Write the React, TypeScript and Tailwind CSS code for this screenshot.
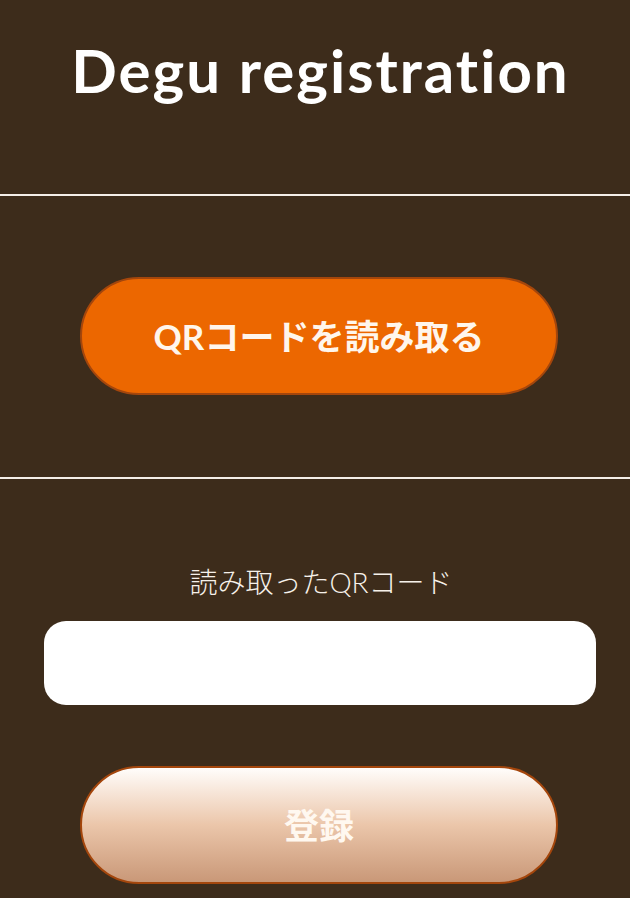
import { FC } from "react";

const font = "font-['Lato','Noto_Sans_CJK_JP',sans-serif]";

const App: FC = () => {
  return (
    <main className={`min-h-[898px] w-full bg-[#3d2c1b] text-white ${font}`}>
      <header className="h-[194px] pt-[34px] pl-[11px]">
        <h1 className="text-center text-[60px] font-bold leading-[72px] tracking-[2px] [font-variant-ligatures:none]">
          Degu registration
        </h1>
      </header>
      <hr className="h-[2px] border-0 bg-[#f4efe9]" />

      <section className="h-[281px] pt-[81px]">
        <button
          type="button"
          className="ml-[80px] flex h-[118px] w-[478px] items-center justify-center rounded-full border-2 border-[#a4460c] bg-[#ec6700] text-[35px] font-bold text-[#fff6ec]"
        >
          QRコードを読み取る
        </button>
      </section>
      <hr className="h-[2px] border-0 bg-[#f4efe9]" />

      <section className="pt-[85px] pb-[13px]">
        <p className="pl-[12px] text-center text-[28px] font-light leading-[36px] text-[#f6f1ea]">
          読み取ったQRコード
        </p>
        <input
          type="text"
          aria-label="QR code"
          className="mt-[21px] ml-[44px] block h-[84px] w-[552px] rounded-[22px] bg-white px-5 text-2xl text-black outline-none"
        />
        <button
          type="button"
          className="mt-[61px] ml-[80px] flex h-[118px] w-[478px] items-center justify-center rounded-full border-2 border-[#a4460c] bg-gradient-to-b from-[#fffdfb] via-[#ebc6aa] to-[#c99878] text-[35px] font-bold text-[#fff8f0]"
        >
          登録
        </button>
      </section>
    </main>
  );
};

export default App;
